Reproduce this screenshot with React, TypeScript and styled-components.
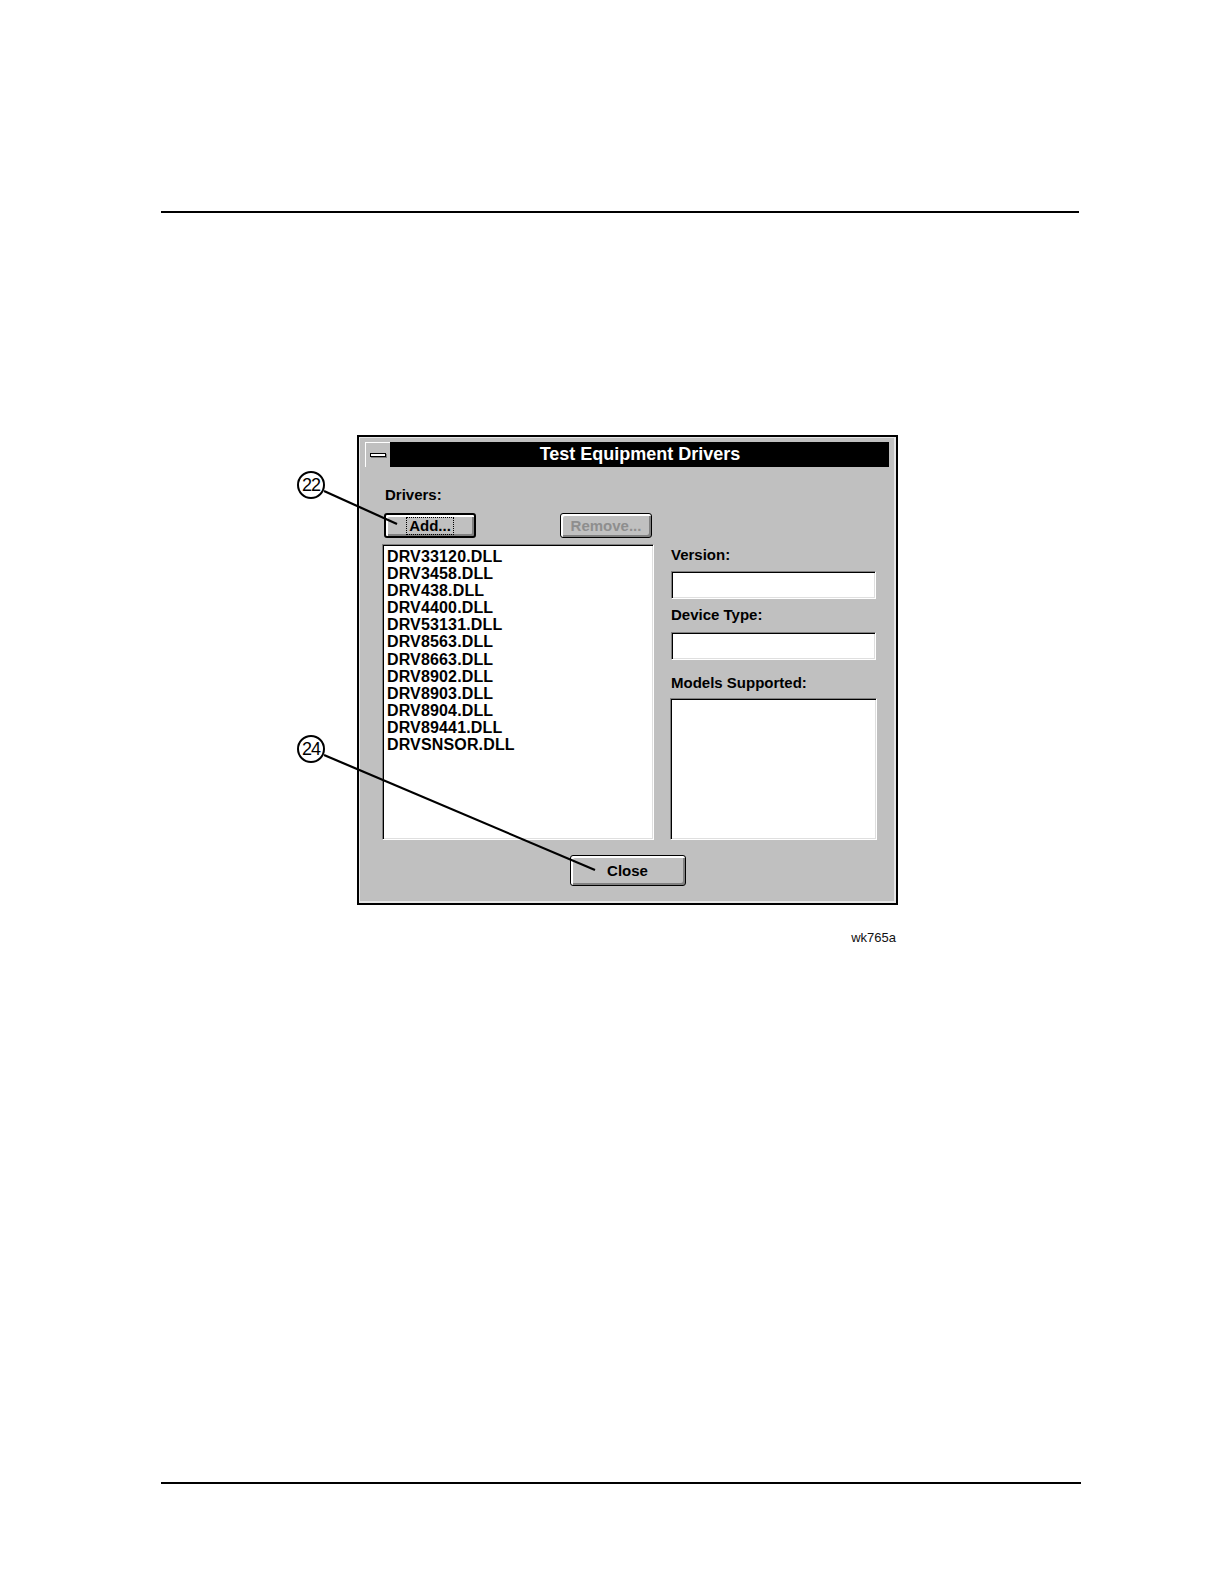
import React from 'react'
import styled, { createGlobalStyle } from 'styled-components'

const GlobalStyle = createGlobalStyle`
  html, body {
    margin: 0;
    padding: 0;
    background: #fff;
  }
  body {
    font-family: "Liberation Sans", Arial, sans-serif;
  }
`

const Page = styled.div`
  width: 1222px;
  height: 1582px;
  box-sizing: border-box;
  display: flex;
  flex-direction: column;
  padding-top: 211px;
  padding-bottom: 98px;
`

const Rule = styled.div<{ $bottom?: boolean }>`
  flex-shrink: 0;
  margin-left: 161px;
  width: ${(p) => (p.$bottom ? 920 : 918)}px;
  height: 2px;
  background: #000;
  margin-top: ${(p) => (p.$bottom ? 'auto' : '0')};
`

const Figure = styled.div`
  position: relative;
  margin-top: 222px;
  margin-left: 357px;
  width: 541px;
`

const Dialog = styled.div`
  box-sizing: border-box;
  width: 541px;
  border: 2px solid #000;
  background: #c0c0c0;
  padding: 5px 6px 4px 6px;
  display: flex;
  flex-direction: column;
  box-shadow: inset 1px 1px 0 #e6e6e6, inset -2px -2px 0 #e6e6e6;
`

const TitleBar = styled.div`
  display: flex;
  height: 25px;
`

const SysMenu = styled.div`
  width: 26px;
  box-sizing: border-box;
  background: #c0c0c0;
  border-right: 1px solid #000;
  box-shadow: inset 1px 1px 0 #fff;
  display: flex;
  align-items: center;
  justify-content: center;
`

const SysGlyph = styled.div`
  width: 14px;
  height: 2px;
  background: #fff;
  border: 1px solid #000;
  box-shadow: 1px 1px 0 #808080;
`

const Caption = styled.div`
  flex: 1;
  background: #000;
  color: #fff;
  font-size: 18px;
  font-weight: bold;
  display: flex;
  align-items: center;
  justify-content: center;
  margin-right: 1px;
`

const Body = styled.div`
  display: grid;
  grid-template-columns: 272px 207px;
  grid-template-rows: auto 296px;
  column-gap: 16px;
  row-gap: 6px;
  padding: 19px 13px 0 17px;
`

const Header = styled.div`
  grid-column: 1;
  grid-row: 1;
`

const Label = styled.div<{ $gap?: number; $indent?: number }>`
  font-size: 15px;
  font-weight: bold;
  line-height: 18px;
  color: #000;
  margin-top: ${(p) => p.$gap ?? 0}px;
  margin-left: ${(p) => p.$indent ?? 0}px;
`

const ButtonRow = styled.div`
  display: flex;
  justify-content: space-between;
  margin-top: 9px;
  padding: 0 2px;
`

const Button = styled.button<{ $w: number; $h: number; $default?: boolean; $off?: boolean }>`
  box-sizing: border-box;
  width: ${(p) => p.$w}px;
  height: ${(p) => p.$h}px;
  padding: 0;
  background: #c0c0c0;
  border: ${(p) => (p.$default ? 2 : 1)}px solid #000;
  border-radius: 3px;
  box-shadow: inset 1px 1px 0 #fff, inset 2px 2px 0 #fff, inset -1px -1px 0 #808080,
    inset -2px -2px 0 #808080;
  font-family: "Liberation Sans", Arial, sans-serif;
  font-size: 15px;
  font-weight: bold;
  color: ${(p) => (p.$off ? '#8e8e8e' : '#000')};
  display: flex;
  align-items: center;
  justify-content: center;
`

const Focus = styled.span`
  border: 1px dotted #000;
  padding: 0 2px;
  line-height: 16px;
`

const inset = `
  box-sizing: border-box;
  background: #fff;
  border: 1px solid;
  border-color: #808080 #fff #fff #808080;
  box-shadow: inset 1px 1px 0 #000, inset -1px -1px 0 #dfdfdf;
`

const ListBox = styled.div`
  ${inset}
  grid-column: 1;
  grid-row: 2;
  padding: 3px 0 0 4px;
`

const ListItem = styled.div`
  font-size: 16px;
  font-weight: bold;
  line-height: 17.1px;
  letter-spacing: 0.15px;
  color: #000;
`

const Details = styled.div`
  grid-column: 2;
  grid-row: 2;
  display: flex;
  flex-direction: column;
`

const Field = styled.div<{ $gap: number }>`
  ${inset}
  height: 28px;
  margin: ${(p) => p.$gap}px 1px 0;
`

const ModelsBox = styled.div`
  ${inset}
  flex: 1;
  margin-top: 6px;
`

const Footer = styled.div`
  display: flex;
  justify-content: center;
  padding: 15px 0 13px;
`

const FigureLabel = styled.div`
  width: 539px;
  margin-top: 26px;
  text-align: right;
  font-size: 13px;
  line-height: 14px;
  color: #111;
`

const Callout = styled.div<{ $top: number }>`
  position: absolute;
  left: -60px;
  top: ${(p) => p.$top}px;
  width: 28px;
  height: 28px;
  box-sizing: border-box;
  border: 2px solid #000;
  border-radius: 50%;
  display: flex;
  align-items: center;
  justify-content: center;
  font-size: 18px;
  letter-spacing: -1px;
  color: #000;
`

const Leaders = styled.svg`
  position: absolute;
  left: -70px;
  top: 0;
  width: 611px;
  height: 470px;
  overflow: visible;
  pointer-events: none;
`

const drivers = [
  'DRV33120.DLL',
  'DRV3458.DLL',
  'DRV438.DLL',
  'DRV4400.DLL',
  'DRV53131.DLL',
  'DRV8563.DLL',
  'DRV8663.DLL',
  'DRV8902.DLL',
  'DRV8903.DLL',
  'DRV8904.DLL',
  'DRV89441.DLL',
  'DRVSNSOR.DLL',
]

export default function App() {
  return (
    <>
      <GlobalStyle />
      <Page>
        <Rule />
        <Figure>
          <Dialog>
            <TitleBar>
              <SysMenu>
                <SysGlyph />
              </SysMenu>
              <Caption>Test Equipment Drivers</Caption>
            </TitleBar>
            <Body>
              <Header>
                <Label $indent={3}>Drivers:</Label>
                <ButtonRow>
                  <Button $w={92} $h={25} $default>
                    <Focus>Add...</Focus>
                  </Button>
                  <Button $w={92} $h={25} $off>
                    Remove...
                  </Button>
                </ButtonRow>
              </Header>
              <ListBox>
                {drivers.map((d) => (
                  <ListItem key={d}>{d}</ListItem>
                ))}
              </ListBox>
              <Details>
                <Label $gap={2} $indent={1}>Version:</Label>
                <Field $gap={7} />
                <Label $gap={7} $indent={1}>Device Type:</Label>
                <Field $gap={8} />
                <Label $gap={14} $indent={1}>Models Supported:</Label>
                <ModelsBox />
              </Details>
            </Body>
            <Footer>
              <Button $w={116} $h={31}>Close</Button>
            </Footer>
          </Dialog>
          <FigureLabel>wk765a</FigureLabel>
          <Callout $top={36}>22</Callout>
          <Callout $top={300}>24</Callout>
          <Leaders viewBox="0 0 611 470">
            <line x1="37" y1="56" x2="110" y2="89" stroke="#000" strokeWidth="2.2" />
            <line x1="37" y1="320" x2="308" y2="435" stroke="#000" strokeWidth="2.2" />
          </Leaders>
        </Figure>
        <Rule $bottom />
      </Page>
    </>
  )
}
